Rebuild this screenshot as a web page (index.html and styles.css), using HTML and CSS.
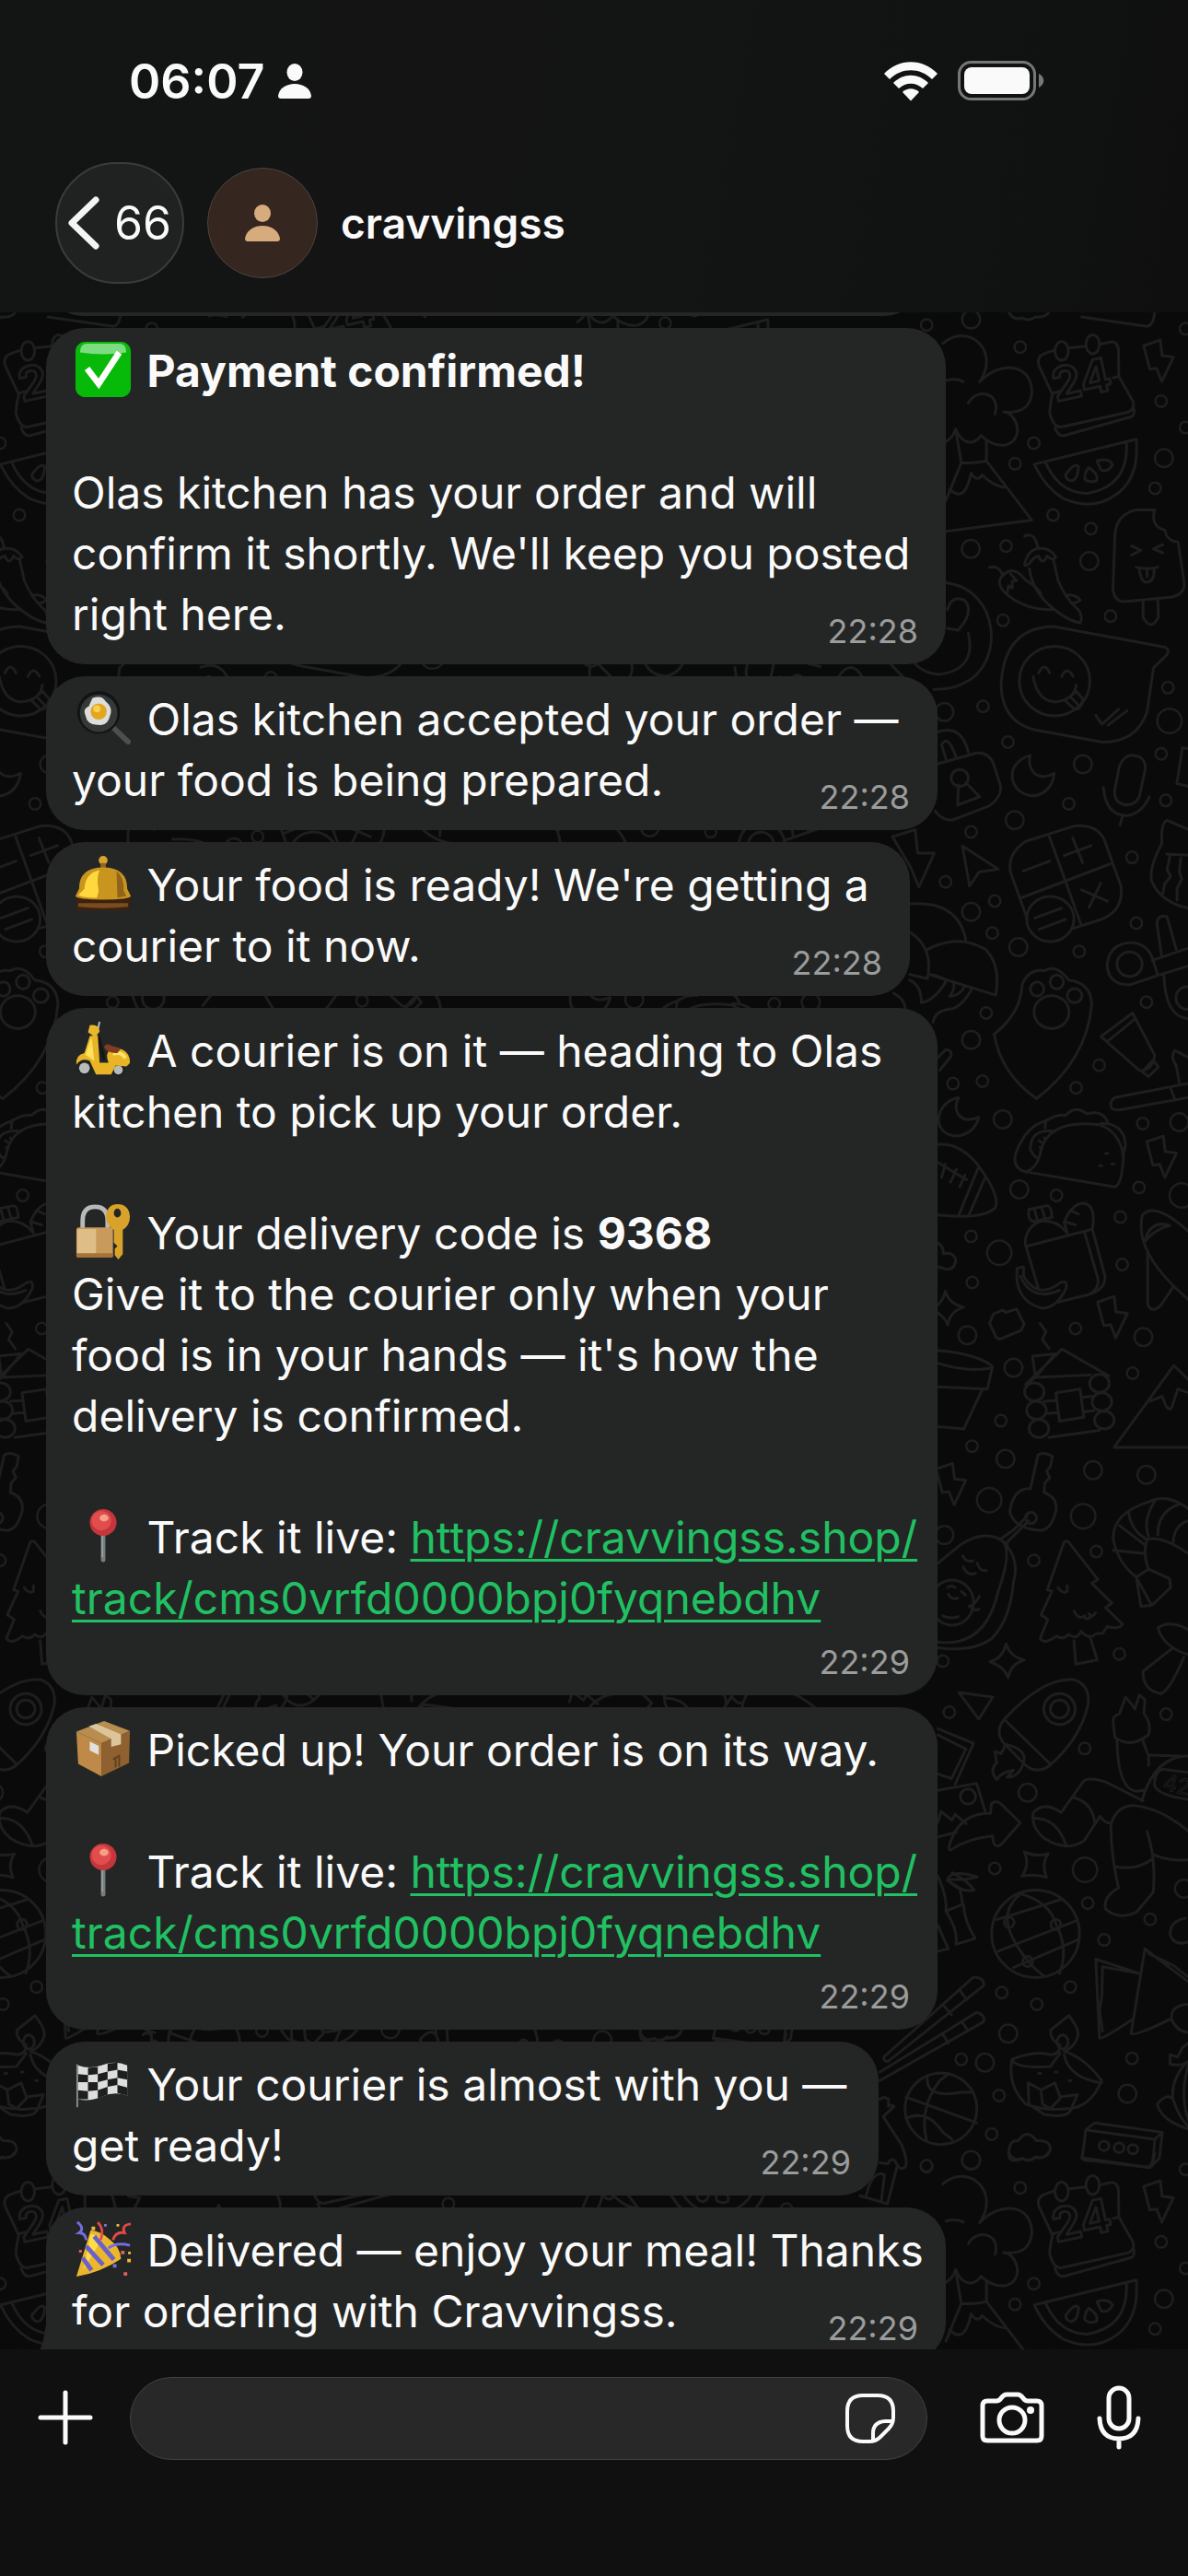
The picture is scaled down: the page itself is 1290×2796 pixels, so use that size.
FILE: index.html
```html
<!DOCTYPE html>
<html lang="en">
<head>
    <meta charset="UTF-8">
    <meta name="viewport" content="width=device-width, initial-scale=1.0">
    <title>cravvingss</title>
    <link rel="stylesheet" href="styles.css">
</head>
<body>
    <header class="header">
        <div class="status-bar">
            <div class="status-time">
                <span>06:07</span>
                <svg class="status-person" viewBox="0 0 36 38" aria-hidden="true">
                    <ellipse cx="18" cy="9.500" rx="8.500" ry="9.500"/>
                    <path d="M3 38C1 38 0 37 0 35C1 27 9 22 18 22C27 22 35 27 36 35C36 37 35 38 33 38Z"/>
                </svg>
            </div>
            <div class="status-icons">
                <svg class="wifi" viewBox="0 0 58 43" aria-hidden="true">
                    <path d="M0 13C16-4 42-4 58 13L52 19C39 6 19 6 6 19Z"/>
                    <path d="M10 23C21 12 37 12 48 23L42 29C34 22 24 22 16 29Z"/>
                    <path d="M20 33C25 28 33 28 38 33L29 42.500Z"/>
                </svg>
                <svg class="battery" viewBox="0 0 94 44" aria-hidden="true">
                    <rect x="1.500" y="1.500" width="82" height="40" rx="13" fill="none" stroke="#767777" stroke-width="3"/>
                    <rect x="7" y="7" width="71" height="29" rx="8"/>
                    <path d="M88 14C95 17 95 26 88 29Z" fill="#767777"/>
                </svg>
            </div>
        </div>
        <div class="chat-bar">
            <button class="back" type="button" aria-label="Back, 66 unread chats">
                <svg class="chevron" viewBox="0 0 34 58" aria-hidden="true">
                    <path d="M30 4L4 29L30 54"/>
                </svg>
                <span>66</span>
            </button>
            <div class="avatar">
                <svg viewBox="0 0 38 40" aria-hidden="true">
                    <ellipse cx="19" cy="9.500" rx="9" ry="9.500"/>
                    <path d="M3 40C1 40 0 39 0 37C1 29 9 23 19 23C29 23 37 29 38 37C38 39 37 40 35 40Z"/>
                </svg>
            </div>
            <h1 class="chat-name">cravvingss</h1>
        </div>
    </header>

    <main class="chat">
        <!-- Doodle wallpaper -->
        <svg class="wallpaper" viewBox="0 0 1290 2210" preserveAspectRatio="xMinYMin slice" aria-hidden="true">
            <defs>
                <path id="bolt" d="M0 0l54-12 6 33 37 3-38 52-17-28-22 2z"/>
                <g id="part-top" transform="translate(900 0) scale(.3333 .5102)">
                    <path d="M370 66C450 20 560 80 490 148C560 100 660 110 660 170C655 205 620 215 568 212C610 212 640 270 575 282C540 285 515 275 495 262C470 285 430 280 412 248C405 262 395 270 380 275M380 145q30-6 57 2M453 193C480 160 560 170 540 216M412 250L430 320L380 400M430 320Q470 322 512 316V272M512 316L660 442L380 466M392 376C430 400 450 380 462 342Q482 362 498 346Q540 372 575 372"/>
                    <path d="M735 80L700 88Q675 95 682 112L727 175Q718 200 718 215Q730 245 755 244L975 212Q995 205 990 190L943 136L942 80Q938 60 915 63L880 68M780 76L835 72M727 172L752 168M925 139L943 136M735 245Q745 265 765 262L985 222Q995 218 992 205"/>
                    <ellipse cx="757" cy="82" rx="22" ry="20"/><ellipse cx="858" cy="68" rx="22" ry="20"/>
                    <use href="#bolt" x="1024" y="71"/>
                    <path d="M668 323L1000 270Q1010 350 940 385Q860 425 760 395Q700 370 668 323ZM705 320Q750 385 840 385Q975 370 968 278"/>
                    <path d="M770 345Q800 318 812 328Q808 360 785 358Q770 355 770 345ZM845 330Q880 345 870 358Q845 364 832 354Q832 340 845 330ZM872 316Q910 308 923 324Q905 342 885 335Z"/>
                    <path d="M1060 420H1000Q930 430 930 480L924 590Q930 615 960 615L1110 606Q1160 600 1156 575L1136 488Q1100 488 1093 463Q1045 455 1060 420ZM1022 614V648Q1047 680 1072 648L1070 610M985 497L1015 506L985 516M1086 494L1056 503L1086 511M1000 542Q1035 548 1070 542M1010 546Q1015 575 1035 574Q1060 572 1058 545M1035 548v14"/>
                    <path d="M636 476Q670 466 680 502M636 536Q650 500 690 502Q720 502 738 520Q725 530 710 518Q695 540 682 518Q665 520 655 532Q640 542 636 536M652 545Q660 590 720 625Q780 658 818 660Q825 650 815 635Q770 610 745 570Q735 540 730 525M522 542Q555 538 565 560Q600 535 640 570Q670 580 690 598M565 560Q540 575 575 598Q640 635 730 632M580 596l4-14 12 4 0-14 14-2-20-14M770 602Q800 598 818 612Q800 622 785 616"/>
                    <path d="M380 575C560 590 570 750 440 788Q400 802 340 802M200 748L240 775M385 632Q400 600 440 612Q475 635 420 676L385 672M453 682Q480 760 357 770Q310 768 280 748M30 775Q70 735 108 775"/>
                    <path d="M730 668L1095 712Q1110 718 1100 728L1056 756L1035 850Q1000 915 890 914L670 888Q560 870 560 790Q570 670 730 668ZM682 767Q700 742 718 767M757 774Q775 750 794 774M664 775Q680 830 740 828Q800 822 804 792M768 825L805 806L826 822Q820 850 795 842ZM786 818l24 16M868 857L888 876L942 844M908 878L970 847"/>
                    <ellipse cx="734" cy="784" rx="115" ry="74"/>
                    <path d="M354 892Q430 875 453 935M380 950L366 920Q385 895 413 945M354 960L480 937Q520 935 535 960L557 1005Q565 1030 520 1050L400 1080Q365 1080 345 1060M421 1005L418 1048L490 1030L445 1000"/>
                    <ellipse cx="425" cy="990" rx="28" ry="18"/>
                    <path d="M655 942C560 960 590 1030 670 1028Q725 1020 733 980Q690 995 665 978Q645 960 655 942Z"/>
                    <path d="M945 965Q960 940 990 942Q1035 945 1028 975L1010 1030Q995 1050 960 1047Q925 1040 930 1015ZM893 1010Q900 1070 970 1070Q1020 1065 1042 1030M955 1072L947 1090"/>
                    <path d="M434 1135L550 1184L488 1190L457 1220ZM206 1115L280 1100L288 1150L342 1150L292 1222L265 1180Z"/>
                    <path d="M640 1125L800 1092Q870 1088 895 1120L950 1220Q960 1270 890 1290L795 1310M645 1290L590 1190Q580 1150 640 1125M717 1115L820 1302M625 1245L915 1173M632 1188L718 1167M765 1155L853 1134M793 1118L825 1170M822 1228L906 1252M884 1214L846 1266M670 1288L757 1267M684 1312L770 1291"/>
                    <ellipse cx="720" cy="1290" rx="77" ry="48"/>
                    <path d="M262 1258Q420 1250 445 1335M320 1355Q420 1320 510 1355Q560 1390 542 1452L325 1408M262 1318Q340 1350 320 1417L262 1408M330 1408Q385 1415 378 1425Q340 1465 300 1468Q300 1430 262 1420M392 1454Q410 1440 405 1428M392 1454Q420 1455 440 1435M465 1438Q430 1480 390 1482Q345 1485 338 1510M210 1448Q245 1460 247 1478"/>
                    <path d="M537 1535Q625 1490 628 1430Q650 1395 700 1400Q740 1385 780 1420Q850 1425 855 1470Q840 1590 675 1672Q560 1620 537 1535Z"/>
                    <ellipse cx="677" cy="1439" rx="22" ry="15"/><ellipse cx="741" cy="1424" rx="22" ry="15"/><ellipse cx="799" cy="1453" rx="24" ry="15"/><ellipse cx="724" cy="1488" rx="57" ry="35"/>
                    <path d="M1170 1100L1100 1080Q1080 1085 1083 1130Q1040 1180 1050 1210Q1080 1255 1170 1267M1098 1152L1170 1154M1110 1155l-10 30 12 15-20 15-5 20M1145 1160l-5 30 8 15-15 20v25M1170 928L1150 926L1132 1002L1170 1008"/>
                    <path d="M1070 1410L980 1430Q905 1430 905 1385Q915 1340 990 1340Q1040 1345 1055 1378ZM1052 1378L1170 1352M1070 1410L1170 1390M1082 1366L1067 1300Q1070 1280 1100 1285L1130 1355M1090 1410Q1095 1500 1170 1502"/>
                    <ellipse cx="978" cy="1386" rx="41" ry="26"/><ellipse cx="1165" cy="1458" rx="36" ry="24"/>
                    <path d="M885 1540L988 1490L1060 1580Q1050 1615 1010 1612ZM905 1551L995 1503M1020 1615L1055 1590L1072 1605L1040 1625Z"/>
                    <path d="M585 0Q600 18 630 12Q650 20 670 10Q710 12 718 -4M822 10L1035 30Q1055 28 1060 0"/>
                </g>
                <g id="part-middle" transform="translate(900 760) scale(.3333 .5102)">
                    <path d="M422 180C340 190 330 262 420 262Q475 255 487 222Q440 235 420 215Q405 200 422 180ZM354 95L380 78Q400 78 397 92L360 122"/>
                    <path d="M354 280Q420 275 480 320Q560 390 540 415Q500 440 354 430M485 330L422 430M508 350L455 430M354 318L447 355M378 322L366 350M415 332L395 360M442 345L425 370"/>
                    <path d="M640 338Q595 330 607 300Q640 240 705 230Q740 215 770 218Q800 195 840 215Q890 205 907 232M640 338L930 370Q955 365 958 300Q940 250 880 238Q720 225 690 290Q680 330 640 338M885 235Q960 235 965 280Q962 295 955 300M703 245q0-12 5-18M735 252Q655 245 655 290Q665 305 680 310M684 272l6 3M700 266l6 3M686 286l6 3M900 299h8M880 325h8M920 321h8"/>
                    <path d="M680 584L638 490Q640 455 690 443Q740 440 770 465M645 496L857 460L898 560Q900 590 840 600L745 615M832 468L875 565Q880 590 840 600M775 468L765 445Q790 405 830 405Q870 410 857 460M785 420l26 8M772 445l30 6M650 418L710 410Q725 412 725 435L665 444Q645 440 650 418ZM668 417l10 24M692 414l10 22M612 543L633 540V560Q680 610 750 575Q775 565 772 585Q740 630 690 628Q600 610 612 543ZM622 560Q660 615 750 590"/>
                    <use href="#bolt" x="1034" y="274"/><use href="#bolt" x="874" y="615"/><use href="#bolt" x="348" y="970"/>
                    <path d="M524 1380Q565 1372 576 1342Q590 1370 635 1376Q590 1385 583 1414Q570 1390 524 1380ZM328 630Q368 622 378 592Q392 620 438 626Q392 635 386 664Q372 640 328 630Z"/>
                    <path d="M522 660L535 640L565 632L575 637L610 630L635 662L625 675L560 693Q545 695 540 685ZM354 490Q372 495 372 512Q410 508 412 528Q405 548 380 545L354 540"/>
                    <path d="M640 790L758 715L910 772M640 790L672 775L662 730L735 725L672 775L850 770M738 808L817 800L829 860L750 868ZM700 826L738 824M822 818L855 815M708 852L745 850M828 848L862 846M715 903L880 888M686 660l20 18-12 16 22 20"/>
                    <ellipse cx="668" cy="806" rx="32" ry="19"/><ellipse cx="675" cy="845" rx="32" ry="19"/><ellipse cx="683" cy="884" rx="32" ry="19"/>
                    <ellipse cx="880" cy="788" rx="32" ry="19"/><ellipse cx="888" cy="827" rx="32" ry="19"/><ellipse cx="896" cy="866" rx="32" ry="19"/>
                    <path d="M1170 780L1122 750L928 924H1170M1045 826L1085 815Q1100 850 1115 840L1135 800L1170 808"/>
                    <path d="M1020 430Q1060 400 1170 465M1020 430Q990 510 1170 610M1037 505V620Q1050 640 1080 622L1118 585M1030 480Q1050 440 1110 452Q1060 460 1030 485"/>
                    <path d="M354 718Q480 725 532 752L515 800L354 795M354 745Q450 765 530 755M497 803L438 885L354 880"/>
                    <path d="M655 1012L680 940Q700 932 727 943L720 965L708 975L718 988L702 1000L700 1020Q745 1030 738 1060Q720 1105 680 1100Q600 1095 588 1060Q600 1010 655 1012ZM650 1080L580 1125M645 1070L600 1100L555 1120L580 1130"/>
                    <ellipse cx="657" cy="1074" rx="18" ry="12"/>
                    <path d="M354 1170L430 1130Q500 1100 560 1120Q600 1140 550 1230Q510 1350 354 1338M575 1130Q620 1165 600 1210Q590 1290 530 1330Q470 1360 354 1350M435 1155q10 14 34 10M436 1178q14 20 40 14M482 1170q8 18 30 16M386 1222q12-6 24 0M388 1236q10 14 30 8M430 1230l14 8M370 1282q24 8 50 2M455 1262q22-5 34-22M460 1262q10 12 28 6"/>
                    <ellipse cx="400" cy="1254" rx="70" ry="48"/>
                    <path d="M710 1227L765 1125Q775 1120 785 1130L875 1205L855 1213L920 1255L900 1265L955 1300Q945 1312 905 1305L890 1320Q865 1318 860 1325Q840 1330 820 1315Q805 1335 780 1322Q760 1335 740 1325Q700 1345 687 1330L712 1290L690 1280L725 1230ZM797 1335L803 1385L873 1376L850 1328M745 1222q15 15 30 8v-12M797 1272q15 20 35 10q0 12 20 2M845 1278q15 8 22-2"/>
                    <path d="M1170 1055Q1100 1020 1040 1040Q920 1065 925 1120Q940 1170 1000 1200L1040 1183Q1020 1150 1035 1120Q1080 1110 1170 1150M975 1060Q980 1100 1035 1120M945 1090L1025 1130M925 1143L1030 1150M1060 1038Q1020 1080 1040 1112M1140 1045Q1070 1060 1070 1110M1170 1080Q1120 1090 1120 1130M1000 1200L1015 1262L1050 1260L1112 1222L1108 1203L1040 1183M1000 1200L1050 1260"/>
                    <path d="M1170 1312Q1110 1290 1070 1308Q1090 1350 1170 1365M1120 1350L1022 1400Q1020 1440 1080 1448Q1110 1440 1155 1370M422 1445L533 1455L487 1502Z"/>
                    <path d="M1170 150L930 180Q910 190 920 203Q930 208 950 206L1170 180M1110 158L1125 182M1140 148L1130 112Q1110 95 1125 80L1170 95"/>
                </g>
                <g id="part-bottom" transform="translate(900 1500) scale(.3333 .5102)">
                    <path d="M570 52Q700-40 800-32Q850-20 843 20Q820 90 722 148Q680 170 640 150L565 100Q540 75 570 52L722 148M575 105Q640 115 635 140Q620 175 580 175L600 160Q560 165 545 180Q520 160 545 145L540 120L560 125Z"/>
                    <ellipse cx="750" cy="30" rx="51" ry="33"/><ellipse cx="750" cy="30" rx="30" ry="19"/>
                    <path d="M937 97Q940 200 1000 205L1025 203M1022 225L900 185Q850 175 830 182L755 250Q700 225 665 250Q655 280 700 305Q770 335 830 310Q850 290 882 258Q900 275 920 272M1040 150V130L1020 95M925 60Q920 45 945 40L965 5L985 20L995 30L1010 0L1028 10L1025 40Q1050 60 1040 85Q980 115 930 90ZM665 262Q740 260 772 320M797 218Q860 230 865 275M920 270Q940 235 990 235Q1080 240 1170 290M918 275Q915 330 942 410Q890 430 900 455Q940 480 1000 462L1055 420Q1065 350 1035 290M930 365Q1000 375 1055 348M1055 340Q1110 355 1170 350M1018 225Q1060 130 1170 130M1045 128L1140 130M1170 165L1085 158Q1055 165 1060 195Q1080 215 1170 222"/>
                    <path d="M354 72L470 103L410 190M354 85L445 115L398 178L354 168M354 203L480 188L508 248M354 270l10-22 36 18 10-12 36 20M354 302l60-10"/>
                    <ellipse cx="452" cy="216" rx="25" ry="16"/>
                    <path d="M395 330Q380 330 410 290Q450 250 525 252L528 232Q540 222 560 232L622 272L560 318Q535 330 532 300Q450 305 395 330ZM635 334Q672 345 713 338Q690 360 708 388Q670 380 628 385Q655 360 635 334Z"/>
                    <path d="M354 385Q385 430 380 460L435 445L425 410L385 395M354 490L388 540L354 545M380 460Q420 500 413 530L475 518Q440 480 438 448M385 392Q400 370 482 387Q440 395 385 392Q420 420 472 415Q450 395 400 378"/>
                    <ellipse cx="672" cy="508" rx="143" ry="93"/>
                    <path d="M545 478L755 435M550 545L805 480M600 580L812 520M625 422Q550 460 600 520Q640 570 700 598M620 422Q720 440 740 490Q780 540 750 592"/>
                    <ellipse cx="586" cy="484" rx="16" ry="11"/><ellipse cx="738" cy="488" rx="16" ry="11"/><ellipse cx="646" cy="567" rx="16" ry="11"/>
                    <path d="M1010 592L868 562L880 730Q890 732 987 690M1008 592L890 578L888 640L880 670L890 715M1170 610L1028 540L983 720Q990 728 1115 688M1170 600L1120 575L1040 550M1115 690Q1110 660 1170 658M1115 690Q1130 715 1170 718"/>
                    <path d="M178 770L470 600Q505 600 503 618L190 780Q175 778 178 770M375 662L398 680M425 628L447 648M165 802L480 675Q510 680 503 695L165 820M368 720L388 740M432 695L450 712"/>
                    <path d="M595 775Q670 755 720 765Q750 765 752 745Q715 730 722 712L780 682Q815 710 810 725Q800 750 765 758Q830 770 887 820Q850 880 770 880Q700 885 640 870Q580 830 595 775ZM595 775Q605 795 720 790L752 762M765 765Q780 815 887 825M650 870L648 825L690 840L735 825L752 855L808 850L785 885Q770 900 700 892ZM690 845L695 870L720 880L752 858M682 805h6M736 802h6M782 820h6"/>
                    <ellipse cx="760" cy="738" rx="18" ry="15"/><ellipse cx="364" cy="880" rx="117" ry="76"/>
                    <path d="M250 855L480 910M320 810Q310 860 430 845L470 845M318 950Q290 880 360 820L390 805M250 900Q320 880 370 930L400 945M585 970Q590 945 615 948Q645 920 675 948Q720 945 720 968Q700 990 672 982Q650 995 630 985Q580 1000 585 970Z"/>
                    <path d="M835 925Q830 960 823 985Q830 992 850 990L1045 1005Q1055 1000 1060 945ZM835 925L865 910L1085 930L1060 945M1085 930L1075 985L1045 1005"/>
                    <ellipse cx="895" cy="959" rx="16" ry="10"/><ellipse cx="944" cy="963" rx="16" ry="10"/><ellipse cx="989" cy="966" rx="16" ry="10"/>
                    <path d="M1170 740L1150 750L1135 770L1110 765V785Q1150 790 1165 780Q1110 820 1120 860Q1140 900 1170 918M1170 923Q1080 905 1068 870Q1100 845 1120 860M1170 785Q1140 850 1170 905M1160 475Q1110 480 1110 510Q1125 535 1170 525"/>
                    <path d="M165 860q15-8 28 0v15q10-5 18 0l-35 22 60 60q30 50 0 50q-12 0-20-15q-15-10-25 5l-26-2M220 1005L190 1082L100 1065M120 1065q20-55 60-45l-10 55"/>
                </g>
                <!-- Bubbles between the doodles: round dots, hollowed by a second thinner stroke -->
                <path id="dots-small" transform="translate(900 0) scale(.3333 .5102)" d="M622 74h0M666 278h0M605 322h0M729 431h0M852 460h0M576 497h0M566 655h0M916 646h0M1081 189h0M1061 374h0M501 838h0M582 914h0M780 1045h0M1096 1038h0M462 1105h0M379 1211h0M986 1159h0M539 1252h0M531 1320h0M814 1359h0M1000 1299h0M1033 1467h0M511 1490h0M1103 798h0M1081 939h0M317 27h0M1160 35h0M1160 245h0M403 1640h0M499 1635h0M804 1649h0M879 1601h0M1021 1725h0M740 1878h0M948 1924h0M954 2025h0M1009 1861h0M462 1965h0M466 2063h0M802 2161h0M988 2256h0M559 2357h0M465 2411h0M870 2635h0M666 2654h0M945 2853h0M391 2977h0M370 2868h0M832 3054h0M539 3309h0M842 3383h0M895 3461h0M1045 3417h0M562 3573h0M676 3598h0M785 3561h0M430 3715h0M553 3792h0M529 3874h0M317 3943h0M986 3713h0M1097 2981h0"/>
                <path id="dots-big" transform="translate(900 0) scale(.3333 .5102)" d="M462 15h0M461 503h0M847 529h0M1090 310h0M826 961h0M604 1080h0M462 1275h0M616 1350h0M462 1547h0M375 850h0M565 1716h0M619 1865h0M450 2175h0M600 2244h0M574 2438h0M859 2462h0M1033 2472h0M1023 2179h0M1140 1722h0M375 2600h0M646 3148h0M583 3660h0M507 3722h0M971 3788h0M462 3930h0M1155 3352h0"/>
                <path id="dots-large" transform="translate(900 0) scale(.3333 .5102)" d="M1108 869h0M1148 1878h0M554 2000h0M521 2526h0M827 2560h0M833 3312h0"/>
                <g id="doodles">
                    <use href="#part-top"/>
                    <use href="#part-middle"/>
                    <use href="#part-bottom"/>
                    <text class="doodle-text" x="1146" y="97" transform="rotate(-12 1146 97)">24</text>
                    <text class="doodle-text small" x="1261" y="1602" transform="rotate(14 1261 1602)">42</text>
                    <use class="dot" href="#dots-small" stroke-width="15"/>
                    <use class="dot-hole" href="#dots-small" stroke-width="10"/>
                    <use class="dot" href="#dots-big" stroke-width="22"/>
                    <use class="dot-hole" href="#dots-big" stroke-width="17"/>
                    <use class="dot" href="#dots-large" stroke-width="29"/>
                    <use class="dot-hole" href="#dots-large" stroke-width="24"/>
                </g>
                <g id="column">
                    <use href="#doodles"/>
                    <use href="#doodles" y="1997"/>
                </g>
            </defs>
            <use href="#column" x="-1122"/>
            <use href="#column" x="-800" y="-70"/>
            <use href="#column" x="-400" y="-130"/>
            <use href="#column"/>
        </svg>

        <div class="messages">
            <div class="bubble earlier"></div>

            <article class="bubble w-xl">
                <p><svg class="emoji" viewBox="0 0 64 64" role="img" aria-label="Check mark">
                    <rect x="1" y="1" width="62" height="62" rx="11" fill="#07ba0a"/>
                    <path d="M6 13Q6 3 14 3H50Q58 3 58 13Q32 17 6 13Z" fill="#7ddc80"/>
                    <path d="M14 31L27 48L50 13" fill="none" stroke="#fff" stroke-width="7"/>
                </svg> <strong>Payment confirmed!</strong><br><br>Olas kitchen has your order and will<br>confirm it shortly. We'll keep you posted<br>right here.</p>
                <time>22:28</time>
            </article>

            <article class="bubble w-lg">
                <p><svg class="emoji" viewBox="0 0 64 64" role="img" aria-label="Cooking">
                    <path d="M42 42L60 59" stroke="#4c4f4f" stroke-width="6" stroke-linecap="round"/>
                    <circle cx="27" cy="26" r="24" fill="#111414"/>
                    <circle cx="27" cy="27" r="21" fill="#343938"/>
                    <path d="M20 10Q31 6 35 14Q43 20 40 29Q37 42 27 40Q14 41 12 29Q9 22 16 19Z" fill="#dddedb"/>
                    <circle cx="27" cy="25" r="9" fill="#e3a61f"/>
                    <circle cx="25" cy="22" r="4" fill="#f8d052"/>
                </svg> Olas kitchen accepted your order —<br>your food is being prepared.</p>
                <time>22:28</time>
            </article>

            <article class="bubble w-md">
                <p><svg class="emoji" viewBox="0 0 64 64" role="img" aria-label="Bell">
                    <path d="M2 46H62V58Q62 62 56 62H8Q2 62 2 58Z" fill="#3b2111"/>
                    <path d="M4 54H60V58Q32 61 4 58Z" fill="#7a4c20"/>
                    <circle cx="32" cy="6" r="5" fill="#d9a42a"/>
                    <path d="M29 9H35V16H29Z" fill="#93661a"/>
                    <path d="M5 38Q5 14 32 14Q59 14 59 38L63 46Q62 50 32 50Q2 50 1 46Z" fill="#c8951f"/>
                    <path d="M11 38Q12 20 28 17Q24 26 27 40L25 48Q9 48 4 45Z" fill="#ffd83d"/>
                    <path d="M47 18Q56 25 55 40L58 46L48 48Z" fill="#92631b"/>
                </svg> Your food is ready! We're getting a<br>courier to it now.</p>
                <time>22:28</time>
            </article>

            <article class="bubble w-lg">
                <p><svg class="emoji" viewBox="0 0 64 64" role="img" aria-label="Motor scooter">
                    <circle cx="11" cy="53" r="9" fill="#222"/><circle cx="11" cy="53" r="6" fill="#b8bbb9"/>
                    <circle cx="49" cy="55" r="8" fill="#222"/><circle cx="49" cy="55" r="5" fill="#b8bbb9"/>
                    <path d="M28 1L26 10" stroke="#b9bcbb" stroke-width="2"/>
                    <path d="M26 16L33 44" stroke="#151717" stroke-width="4"/>
                    <path d="M17 5Q27 3 28 12L23 18L15 13Z" fill="#e8b92d"/>
                    <path d="M17 17L26 16L28 47H38Q34 36 40 32Q54 28 60 38Q65 48 58 51L46 50L41 60H24L17 45Q8 41 2 49Q1 38 11 36Z" fill="#e9b526"/>
                    <path d="M12 38L19 18L22 45Z" fill="#ffe25c"/>
                    <path d="M43 37Q53 34 57 42" stroke="#ffe36a" stroke-width="4" fill="none"/>
                    <path d="M33 30Q35 24 42 28L52 31L48 36Q38 37 33 30Z" fill="#833d22"/>
                </svg> A courier is on it — heading to Olas<br>kitchen to pick up your order.<br><br><svg class="emoji" viewBox="0 0 64 64" role="img" aria-label="Locked with key">
                    <path d="M9 30V20Q9 4 23 4Q37 4 37 20V30" fill="none" stroke="#b7b9ba" stroke-width="5"/>
                    <rect x="2" y="27" width="41" height="34" rx="3" fill="#c89b5d"/>
                    <path d="M3 29H24V59H3Z" fill="#dfbd87"/>
                    <path d="M2 56H43V59Q43 61 40 61H5Q2 61 2 59Z" fill="#a47338"/>
                    <path fill-rule="evenodd" d="M48 1Q61 1 62 15Q62 25 54 30V57L49 63L45 58V51L48 48L44 44V30Q35 24 35 14Q37 1 48 1ZM48 6A4 5 0 1 0 48 16A4 5 0 1 0 48 6Z" fill="#d9a32b"/>
                </svg> Your delivery code is <strong>9368</strong><br>Give it to the courier only when your<br>food is in your hands — it's how the<br>delivery is confirmed.<br><br><svg class="emoji" viewBox="0 0 64 64" role="img" aria-label="Pin">
                    <path d="M32 28V59" stroke="#777c7e" stroke-width="5" stroke-linecap="round"/>
                    <path d="M31 30V56" stroke="#b9bdbf" stroke-width="1"/>
                    <circle cx="32" cy="17" r="15" fill="#c4363b"/>
                    <circle cx="30" cy="15" r="11" fill="#e14c4d"/>
                    <ellipse cx="33" cy="12" rx="5" ry="4" fill="#f3a189"/>
                </svg> Track it live: <a href="https://cravvingss.shop/track/cms0vrfd0000bpj0fyqnebdhv">https://cravvingss.shop/<br>track/cms0vrfd0000bpj0fyqnebdhv</a></p>
                <time class="below">22:29</time>
            </article>

            <article class="bubble w-lg">
                <p><svg class="emoji" viewBox="0 0 64 64" role="img" aria-label="Package">
                    <path d="M2 13L33 1L62 12L30 26Z" fill="#b98c50"/>
                    <path d="M2 13L30 26V63L4 49Z" fill="#bf8947"/>
                    <path d="M30 26L62 12L61 48L30 63Z" fill="#8f6130"/>
                    <path d="M16 7L24 4L52 16V27L41 30V21Z" fill="#dbc69c"/>
                    <path d="M17 24L27 29V39L17 34Z" fill="#e1e1de"/>
                    <path d="M43 44L50 40V52M46 42V53" stroke="#61401f" stroke-width="2" fill="none"/>
                </svg> Picked up! Your order is on its way.<br><br><svg class="emoji" viewBox="0 0 64 64" role="img" aria-label="Pin">
                    <path d="M32 28V59" stroke="#777c7e" stroke-width="5" stroke-linecap="round"/>
                    <path d="M31 30V56" stroke="#b9bdbf" stroke-width="1"/>
                    <circle cx="32" cy="17" r="15" fill="#c4363b"/>
                    <circle cx="30" cy="15" r="11" fill="#e14c4d"/>
                    <ellipse cx="33" cy="12" rx="5" ry="4" fill="#f3a189"/>
                </svg> Track it live: <a href="https://cravvingss.shop/track/cms0vrfd0000bpj0fyqnebdhv">https://cravvingss.shop/<br>track/cms0vrfd0000bpj0fyqnebdhv</a></p>
                <time class="below">22:29</time>
            </article>

            <article class="bubble w-sm">
                <p><svg class="emoji" viewBox="0 0 64 64" role="img" aria-label="Chequered flag">
                    <path d="M3 11V59" stroke="#8a8d8d" stroke-width="2"/>
                    <path d="M4 12Q16 17 30 12Q45 6 59 12V46Q45 41 31 47Q17 53 4 50Z" fill="#dededd"/>
                    <path d="M15 15L26 14V22L15 23ZM37 10L48 9V17L37 19ZM4 22L15 23V31L4 31ZM26 22L37 19V28L26 31ZM48 17L59 19V28L48 26ZM15 31L26 31V40L15 41ZM37 28L48 26V34L37 36ZM4 40L15 41V50H4ZM26 40L37 36V45L26 49ZM48 34L59 37V46L48 43Z" fill="#1d1f1f"/>
                </svg> Your courier is almost with you —<br>get ready!</p>
                <time>22:29</time>
            </article>

            <article class="bubble w-xl tail">
                <p><svg class="emoji" viewBox="0 0 64 64" role="img" aria-label="Party popper">
                    <path d="M18 11L2 63Q30 58 52 43Q51 30 40 22Q30 12 18 11Z" fill="#edb72d"/>
                    <path d="M18 15L10 55L31 20Z" fill="#ffdc4a"/>
                    <path d="M13 29L32 50M9 42L19 56M22 18L44 44" stroke="#6a62c9" stroke-width="5"/>
                    <path d="M3 2Q12 9 5 14Q12 14 13 22M38 31Q47 24 62 28" fill="none" stroke="#746de0" stroke-width="3"/>
                    <path d="M26 2Q34 10 29 22M63 4Q52 5 56 14Q46 12 43 22" fill="none" stroke="#e34748" stroke-width="3"/>
                    <path d="M19 7h4v4h-4zM59 43h4v4h-4zM47 4h3v3h-3zM60 35h3v3h-3z" fill="#efb839"/>
                    <path d="M33 4h3v3h-3zM43 49h4v4h-4z" fill="#7a70df"/>
                    <path d="M5 33h3v3H5zM55 58h4v4h-4zM52 34h4v4h-4z" fill="#dc625a"/>
                </svg> Delivered — enjoy your meal! Thanks<br>for ordering with Cravvingss.</p>
                <time>22:29</time>
            </article>
        </div>
    </main>

    <footer class="composer">
        <button class="icon-button" type="button" aria-label="Attach">
            <svg width="60" height="60" viewBox="0 0 60 60"><path d="M30 3V57M3 30H57"/></svg>
        </button>
        <div class="field">
            <input type="text" aria-label="Message">
            <button class="icon-button" type="button" aria-label="Stickers">
                <svg class="thin" width="56" height="56" viewBox="0 0 56 56">
                    <path d="M20 3H36Q53 3 53 20V27Q53 34 48 39L39 48Q34 53 27 53H20Q3 53 3 36V20Q3 3 20 3Z"/>
                    <path d="M52 31H44Q31 32 31 44V52"/>
                </svg>
            </button>
        </div>
        <div class="actions">
            <button class="icon-button" type="button" aria-label="Camera">
                <svg width="70" height="56" viewBox="0 0 70 56">
                    <path d="M8 10H18Q21 10 23 7Q26 3 29 3H41Q44 3 47 7Q49 10 52 10H62Q67 10 67 15V48Q67 53 62 53H8Q3 53 3 48V15Q3 10 8 10Z"/>
                    <circle cx="35" cy="31" r="14"/>
                    <circle class="dot-fill" cx="55" cy="20" r="4"/>
                </svg>
            </button>
            <button class="icon-button" type="button" aria-label="Record voice message">
                <svg width="48" height="70" viewBox="0 0 48 70">
                    <rect x="13" y="3" width="22" height="44" rx="11"/>
                    <path d="M3 36Q4 58 24 58Q44 58 45 36M24 58V67"/>
                </svg>
            </button>
        </div>
    </footer>
</body>
</html>
```
FILE: styles.css
```css
* {
    margin: 0;
    padding: 0;
    box-sizing: border-box;
}

body {
    font-family: Inter, "Liberation Sans", sans-serif;
    background-color: #0a0a0a;
    color: #fafafa;
    height: 100vh;
    display: flex;
    flex-direction: column;
    overflow: hidden;
}

button {
    font: inherit;
    color: inherit;
    background: none;
    border: none;
    cursor: pointer;
}

/* Header */
.header {
    background: linear-gradient(100deg, #121514, #141414 35%, #111313 75%, #0f0f0f);
    padding: 56px 60px 31px;
}

.status-bar {
    display: flex;
    justify-content: space-between;
    align-items: center;
    height: 64px;
    margin-bottom: 56px;
    padding: 0 96px 0 80px;
}

.status-time {
    display: flex;
    align-items: center;
    gap: 15px;
    font-size: 52px;
    font-weight: 600;
}

.status-person {
    width: 36px;
    height: 38px;
    fill: #fafafa;
}

.status-icons {
    display: flex;
    align-items: center;
    gap: 22px;
    fill: #fafafa;
}

.wifi {
    width: 58px;
    height: 43px;
}

.battery {
    width: 94px;
    height: 44px;
}

.chat-bar {
    display: flex;
    align-items: center;
    gap: 25px;
}

.back {
    display: flex;
    align-items: center;
    justify-content: center;
    gap: 16px;
    width: 140px;
    height: 132px;
    border: 2px solid #3a3b3b;
    border-radius: 66px;
    background-color: #202121;
    font-size: 50px;
}

.chevron {
    width: 34px;
    height: 58px;
    fill: none;
    stroke: #f4f4f4;
    stroke-width: 7;
    stroke-linecap: round;
    stroke-linejoin: round;
}

.avatar {
    display: flex;
    align-items: center;
    justify-content: center;
    width: 120px;
    height: 120px;
    border: 1px solid #4b4340;
    border-radius: 50%;
    background-color: #35271f;
}

.avatar svg {
    width: 38px;
    height: 40px;
    fill: #d6ab7d;
}

.chat-name {
    font-size: 46px;
    font-weight: 600;
}

/* Conversation */
.chat {
    position: relative;
    flex: 1;
    min-height: 0;
    overflow: hidden;
}

.wallpaper {
    position: absolute;
    top: 0;
    left: 0;
    width: 100%;
    height: 100%;
    fill: none;
    stroke: #1e1e1e;
    stroke-width: 3;
    stroke-linecap: round;
    stroke-linejoin: round;
}

.wallpaper path,
.wallpaper ellipse {
    vector-effect: non-scaling-stroke;
}

.doodle-text {
    font-size: 50px;
    font-weight: 700;
}

.doodle-text.small {
    font-size: 24px;
    font-weight: 400;
    stroke-width: 1;
}

.dot-hole {
    stroke: #0a0a0a;
}

.messages {
    position: relative;
    display: flex;
    flex-direction: column;
    gap: 13px;
    padding: 0 40px 0 50px;
}

.bubble {
    position: relative;
    flex-shrink: 0;
    width: 100%;
    padding: 14px 30px 15px 28px;
    border-radius: 42px;
    background-color: #242625;
    font-size: 48px;
    line-height: 66px;
}

.bubble strong {
    font-weight: 700;
}

.bubble a {
    color: #21c063;
    text-decoration-thickness: 3px;
    text-underline-offset: 6px;
    white-space: nowrap;
}

.bubble time {
    display: block;
    margin-top: -36px;
    color: #9b9c9c;
    font-size: 36px;
    line-height: 42px;
    text-align: right;
}

.bubble time.below {
    margin-top: 15px;
}

.earlier {
    height: 80px;
    margin-top: -76px;
    max-width: 950px;
}

.w-sm {
    max-width: 904px;
}

.w-md {
    max-width: 938px;
}

.w-lg {
    max-width: 968px;
}

.w-xl {
    max-width: 977px;
}

.tail::before {
    content: "";
    position: absolute;
    left: -12px;
    bottom: 0;
    width: 60px;
    height: 40px;
    background-color: #242625;
    clip-path: polygon(20% 0, 100% 0, 100% 100%, 0 100%, 14% 50%);
}

.bubble p {
    margin-right: -20px;
}

.emoji {
    width: 64px;
    height: 62px;
    margin: 0 2px;
    vertical-align: -12px;
}

/* Message composer */
.composer {
    display: flex;
    align-items: flex-start;
    gap: 40px;
    height: 246px;
    padding: 30px 51px 0 41px;
    background-color: #101010;
}

.icon-button {
    display: flex;
    align-items: center;
    justify-content: center;
    height: 88px;
}

.icon-button svg {
    fill: none;
    stroke: #fafafa;
    stroke-width: 5;
    stroke-linecap: round;
    stroke-linejoin: round;
}

.icon-button .thin {
    stroke-width: 4;
}

.icon-button .dot-fill {
    fill: #fafafa;
    stroke: none;
}

.field {
    display: flex;
    flex: 1;
    min-width: 0;
    height: 90px;
    padding: 0 33px 0 40px;
    border: 1px solid #414141;
    border-radius: 45px;
    background-color: #282828;
}

.field input {
    flex: 1;
    min-width: 0;
    border: none;
    outline: none;
    background: none;
    color: #fafafa;
    font: inherit;
    font-size: 48px;
}

.actions {
    display: flex;
    gap: 57px;
    margin-left: 17px;
}
```
